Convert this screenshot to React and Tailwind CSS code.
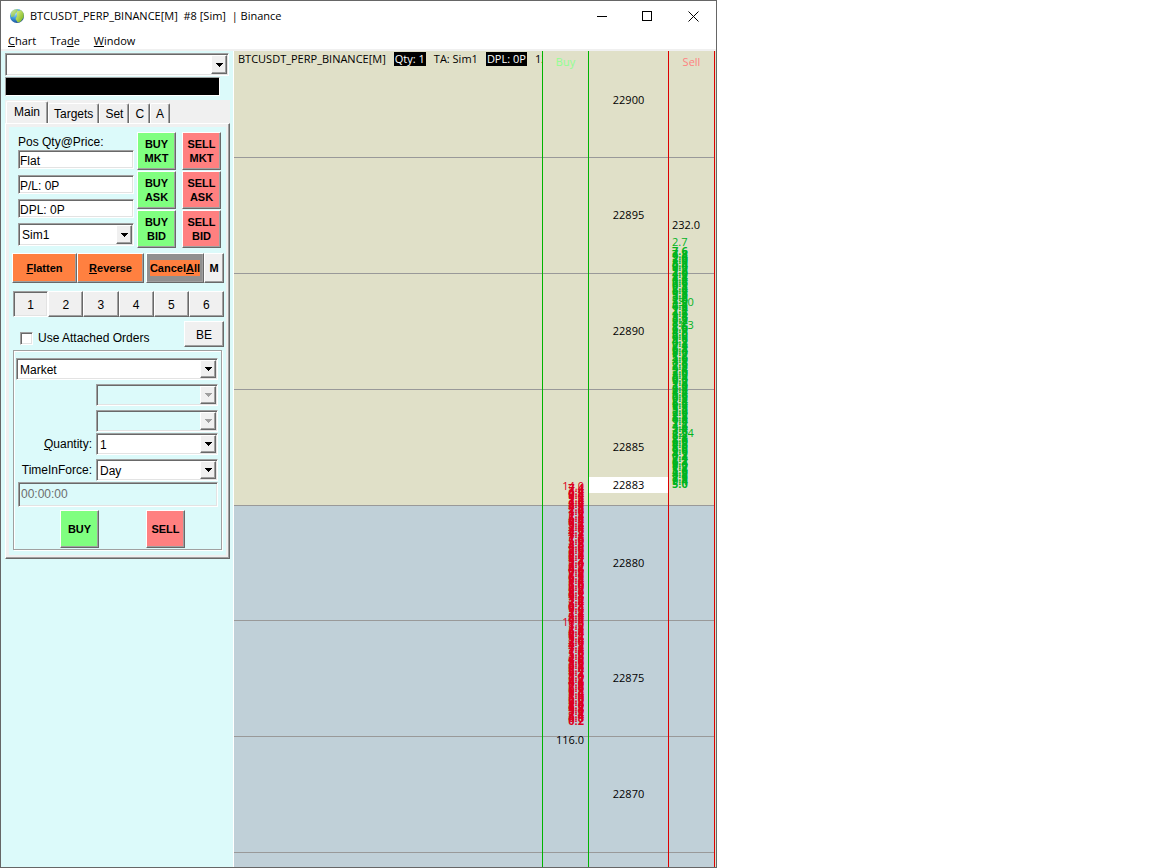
import React, { useState } from 'react';

const RAISED =
  'border border-t-white border-l-white border-r-[#696969] border-b-[#696969] shadow-[inset_-1px_-1px_0_#a0a0a0]';
const SUNKEN =
  'border border-t-[#a0a0a0] border-l-[#a0a0a0] border-r-white border-b-white shadow-[inset_1px_1px_0_#696969,inset_-1px_-1px_0_#e3e3e3]';

// one band covers five price points
const bands = [
  { price: '22900', size: 'h-[107px] pt-px', color: 'bg-[#e0e0c8]' },
  { price: '22895', size: 'h-[116px]', color: 'bg-[#e0e0c8]' },
  { price: '22890', size: 'h-[116px]', color: 'bg-[#e0e0c8]' },
  { price: '22885', size: 'h-[116px]', color: 'bg-[#e0e0c8]' },
  { price: '22880', size: 'h-[115px]', color: 'bg-[#c0d0d8]' },
  { price: '22875', size: 'h-[116px]', color: 'bg-[#c0d0d8]' },
  { price: '22870', size: 'h-[116px]', color: 'bg-[#c0d0d8]' },
];

// empty strings are price levels without resting size
const makeDepth = (count, seed, fixed) =>
  Array.from({ length: count }, (_, i) => {
    if (i in fixed) return fixed[i];
    const n = (i * i * 7 + i * 37 + seed) % 98;
    return ((n + 1) / 10).toFixed(1);
  });

const asks = makeDepth(106, 11, { 0: '2.7', 1: '', 2: '', 3: '', 26: '13.0', 36: '11.3', 83: '12.4', 105: '5.0' });
const bids = makeDepth(103, 29, { 0: '14.0', 59: '10.7', 102: '0.2' });

const Select = ({ id, label, options, disabled, className = '' }) => (
  <div className={`relative ${className}`}>
    <select
      id={id}
      aria-label={label}
      disabled={disabled}
      className={`block h-full w-full appearance-none pt-px pl-[3px] text-[12px] leading-4 text-black outline-none ${SUNKEN} ${
        disabled ? 'bg-[#dcfafa]' : 'bg-white'
      }`}
    >
      {options.map((option) => (
        <option key={option}>{option}</option>
      ))}
    </select>
    <span
      className={`pointer-events-none absolute top-[2px] right-[2px] bottom-[2px] flex w-4 items-center justify-center bg-[#f0f0f0] ${RAISED}`}
    >
      <svg width="7" height="4" viewBox="0 0 7 4" shapeRendering="crispEdges" fill={disabled ? '#a0a0a0' : '#000'}>
        <path d="M0 0h7v1H6v1H5v1H4v1H3V3H2V2H1V1H0z" />
      </svg>
    </span>
  </div>
);

const Button = ({ children, className = '', ...rest }) => (
  <button type="button" className={`flex items-center justify-center text-center ${RAISED} ${className}`} {...rest}>
    {children}
  </button>
);

const OrderButton = ({ side, type }) => (
  <Button
    className={`h-[38px] w-[39px] text-[11px] leading-[14px] font-bold ${side === 'BUY' ? 'bg-[#80ff80]' : 'bg-[#ff8080]'}`}
  >
    <span>
      {side}
      {type && <br />}
      {type}
    </span>
  </Button>
);

const ReadOnly = ({ label, value }) => (
  <input
    readOnly
    aria-label={label}
    value={value}
    className={`h-[19px] w-full bg-white pt-[2px] pl-px text-[12px] leading-4 outline-none ${SUNKEN}`}
  />
);

const TitleBar = () => (
  <header className="bg-white font-['Open_Sans','Noto_Sans',sans-serif] text-[11px]">
    <div className="flex h-[30px] items-center pl-2">
      <svg width="16" height="16" viewBox="0 0 16 16" className="mr-[5px]">
        <defs>
          <radialGradient id="globe" cx="35%" cy="25%" r="80%">
            <stop offset="0" stopColor="#c8ecff" />
            <stop offset="0.5" stopColor="#3f9be0" />
            <stop offset="1" stopColor="#174a92" />
          </radialGradient>
          <linearGradient id="land" x1="0" y1="0" x2="1" y2="1">
            <stop offset="0" stopColor="#e4f58c" />
            <stop offset="1" stopColor="#6fae14" />
          </linearGradient>
        </defs>
        <circle cx="8" cy="8" r="7" fill="url(#globe)" />
        <path d="M2 4.500C4 1.500 7 1 9 1.500L8 4 6 6 5 8.500 2 9z" fill="url(#land)" opacity="0.8" />
        <path d="M8 3.500l4-1.500 2.500 3 .3 4-3 4.500-3 1L6.500 11l1.500-3z" fill="url(#land)" />
      </svg>
      <h1 className="flex-1 truncate whitespace-pre">{'BTCUSDT_PERP_BINANCE[M]  #8 [Sim]  | Binance'}</h1>
      <button type="button" aria-label="Minimize" className="flex h-full w-[46px] items-center justify-center">
        <svg width="11" height="11" shapeRendering="crispEdges">
          <path d="M0 5.500h10" stroke="#000" />
        </svg>
      </button>
      <button type="button" aria-label="Maximize" className="flex h-full w-[45px] items-center justify-center">
        <svg width="11" height="11" shapeRendering="crispEdges">
          <path d="M.5.500h9v9h-9z" fill="none" stroke="#000" />
        </svg>
      </button>
      <button type="button" aria-label="Close" className="flex h-full w-[46px] items-center justify-center">
        <svg width="11" height="11">
          <path d="M.5.500l10 10M10.500.500l-10 10" stroke="#000" />
        </svg>
      </button>
    </div>
    <nav className="flex h-5 items-center gap-[14px] border-b-2 border-[#f0f0f0] pt-[2px] pl-[7px]">
      <button type="button">
        <u>C</u>hart
      </button>
      <button type="button">
        Tra<u>d</u>e
      </button>
      <button type="button">
        <u>W</u>indow
      </button>
    </nav>
  </header>
);

const Tabs = () => {
  const [active, setActive] = useState('Main');
  const tabs = ['Main', 'Targets', 'Set', 'C', 'A'];

  return (
    <div role="tablist" className="flex h-[23px] items-end bg-[#f0f0f0] pl-px">
      {tabs.map((tab) => (
        <button
          key={tab}
          type="button"
          role="tab"
          aria-selected={active === tab}
          onClick={() => setActive(tab)}
          className={`rounded-t-xs border border-b-0 border-t-white border-l-white border-r-[#696969] bg-[#f0f0f0] shadow-[inset_-1px_0_0_#a0a0a0] ${
            active === tab ? 'h-[22px] px-[7px] pb-px' : 'h-5 pr-[5px] pl-[5px]'
          }`}
        >
          {tab}
        </button>
      ))}
    </div>
  );
};

const Account = () => (
  <section className="flex justify-between pr-[4px] pl-[8px]">
    <div className="flex w-[116px] flex-col pt-[2px]">
      <span className="h-4 leading-4">Pos Qty@Price:</span>
      <ReadOnly label="Position" value="Flat" />
      <div className="mt-[6px] flex flex-col gap-[5px]">
        <ReadOnly label="Profit and loss" value="P/L: 0P" />
        <ReadOnly label="Daily profit and loss" value="DPL: 0P" />
        <Select label="Account" options={['Sim1']} className="h-[23px]" />
      </div>
    </div>
    <div className="grid grid-cols-2 gap-x-[6px] gap-y-px">
      <OrderButton side="BUY" type="MKT" />
      <OrderButton side="SELL" type="MKT" />
      <OrderButton side="BUY" type="ASK" />
      <OrderButton side="SELL" type="ASK" />
      <OrderButton side="BUY" type="BID" />
      <OrderButton side="SELL" type="BID" />
    </div>
  </section>
);

const QuickActions = () => (
  <section className="mt-[5px] flex h-[30px] pl-[2px] text-[11px] font-bold">
    <Button className="w-[65px] bg-[#ff8040]">
      <span>
        <u>F</u>latten
      </span>
    </Button>
    <Button className="mr-[2px] w-[67px] bg-[#ff8040]">
      <span>
        <u>R</u>everse
      </span>
    </Button>
    <Button className="w-[58px] bg-[#909090]">
      <span className="bg-[#ff8040]">
        Cancel<u>A</u>ll
      </span>
    </Button>
    <Button className="w-5 bg-[#f0f0f0]">M</Button>
  </section>
);

const Quantities = () => {
  const [selected, setSelected] = useState(1);

  return (
    <section className="mt-[8px] flex h-[26px] pr-px pl-[3px]">
      {[1, 2, 3, 4, 5, 6].map((n) => (
        <button
          key={n}
          type="button"
          onClick={() => setSelected(n)}
          className={`flex-1 bg-[#f0f0f0] pt-px ${selected === n ? SUNKEN : RAISED}`}
        >
          {n}
        </button>
      ))}
    </section>
  );
};

const OrderForm = () => (
  <fieldset className="mr-[3px] ml-[3px] border border-[#a0a0a0] shadow-[inset_1px_1px_0_#fff,1px_1px_0_#fff]">
    <div className="flex flex-col pt-[7px] pr-[3px] pb-px pl-[2px]">
      <Select label="Order type" options={['Market']} className="h-[22px]" />
      <div className="mt-[4px] grid grid-cols-[1fr_122px] items-center gap-x-[4px]">
        <Select label="Price 1" options={['']} disabled className="col-start-2 mb-[4px] h-[22px]" />
        <Select label="Price 2" options={['']} disabled className="col-start-2 mb-px h-[22px]" />
        <label htmlFor="quantity" className="text-right">
          <u>Q</u>uantity:
        </label>
        <Select id="quantity" options={['1']} className="h-[22px]" />
        <label htmlFor="tif" className="mt-[4px] text-right">
          TimeInForce:
        </label>
        <Select id="tif" options={['Day']} className="mt-[4px] h-[22px]" />
      </div>
      <input
        readOnly
        aria-label="Time"
        value="00:00:00"
        className={`mt-px ml-[2px] h-[25px] bg-transparent pb-px pl-[2px] text-[12px] text-[#6d6d6d] outline-none ${SUNKEN}`}
      />
      <div className="mt-[3px] flex gap-[47px] pl-11">
        <OrderButton side="BUY" />
        <OrderButton side="SELL" />
      </div>
    </div>
  </fieldset>
);

const TradePanel = () => (
  <aside className="w-[233px] shrink-0 border-r border-white bg-[#dcfafa] pt-[2px] pr-[3px] pl-[4px] text-[12px] leading-4">
    <Select label="Chart" options={['']} className="mr-px h-[23px]" />
    <div className="mt-px mr-[10px] h-[19px] border border-t-[#a0a0a0] border-l-[#a0a0a0] border-r-white border-b-white bg-black" />
    <div className="mt-[4px]">
      <Tabs />
      <div className={`bg-[#f0f0f0] p-[3px] ${RAISED}`}>
        <div className="bg-[#dcfafa] px-px pt-[5px] pb-[5px]">
          <Account />
          <QuickActions />
          <Quantities />
          <div className="mt-[4px] mb-[3px] flex items-start justify-between pr-px pl-[10px]">
            <label className="mt-[9px] flex items-center gap-[5px]">
              <input type="checkbox" className={`size-[13px] appearance-none bg-white checked:bg-black ${SUNKEN}`} />
              Use Attached Orders
            </label>
            <Button className="h-[26px] w-10 bg-[#f0f0f0] pt-px">BE</Button>
          </div>
          <OrderForm />
        </div>
      </div>
    </div>
  </aside>
);

const Column = ({ className, head, showPrices, children }) => (
  <div className={`relative flex flex-col overflow-hidden ${className}`}>
    {bands.map((band, i) => (
      <div key={band.price} className={`shrink-0 border-b border-[#999] ${band.size} ${band.color}`}>
        {i === 0 && head}
        {showPrices && (
          <div className={`flex h-full items-center justify-center ${i === 0 ? 'pb-[8px]' : ''}`}>{band.price}</div>
        )}
      </div>
    ))}
    <div className="flex-1 bg-[#c0d0d8]" />
    {children}
  </div>
);

const Depth = ({ values, start, className }) =>
  values.map((value, i) => (
    <span
      key={i}
      className={`absolute leading-4 ${value.length > 3 || i === 0 ? 'font-normal' : 'font-bold'} ${className}`}
      style={{ top: Math.round(start + i * 2.3) }}
    >
      {value}
    </span>
  ));

const Ladder = () => (
  <main className="flex min-w-0 flex-1 bg-[#e0e0c8] pr-px font-['Open_Sans','Noto_Sans',sans-serif] text-[11px]">
    <Column
      className="flex-1 border-r border-[#00b400]"
      head={
        <div className="flex gap-2 pl-[4px] leading-[14px] whitespace-nowrap">
          <span>BTCUSDT_PERP_BINANCE[M]</span>
          <span className="bg-black px-px text-white">Qty: 1</span>
          <span>TA: Sim1</span>
          <span className="bg-black px-px text-white">DPL: 0P</span>
          <span>12</span>
        </div>
      }
    />
    <Column
      className="w-[46px] border-r border-[#00b400]"
      head={<div className="pt-[2px] text-center leading-4 text-[#90ff90]">Buy</div>}
    >
      <Depth values={bids} start={427} className="right-[4px] text-[#dc0020]" />
      <span className="absolute top-[681px] right-[4px] leading-4">116.0</span>
    </Column>
    <Column className="w-20 border-r border-[#dc0000]" showPrices>
      <div className="absolute top-[426px] flex h-[16px] w-full items-center justify-center bg-white">22883</div>
    </Column>
    <Column
      className="w-[46px] border-r border-[#dc0000]"
      head={<div className="pt-[2px] text-center leading-4 text-[#ff8080]">Sell</div>}
    >
      <span className="absolute top-[166px] left-[3px] leading-4">232.0</span>
      <Depth values={asks} start={183} className="left-[3px] text-[#00b41e]" />
    </Column>
  </main>
);

export default function App() {
  return (
    <div className="min-h-screen bg-white font-['Liberation_Sans',Arial,sans-serif] text-black">
      <div className="flex min-h-screen w-[62.24%] min-w-[520px] flex-col border border-[#666]">
        <TitleBar />
        <div className="flex flex-1">
          <TradePanel />
          <Ladder />
        </div>
      </div>
    </div>
  );
}
